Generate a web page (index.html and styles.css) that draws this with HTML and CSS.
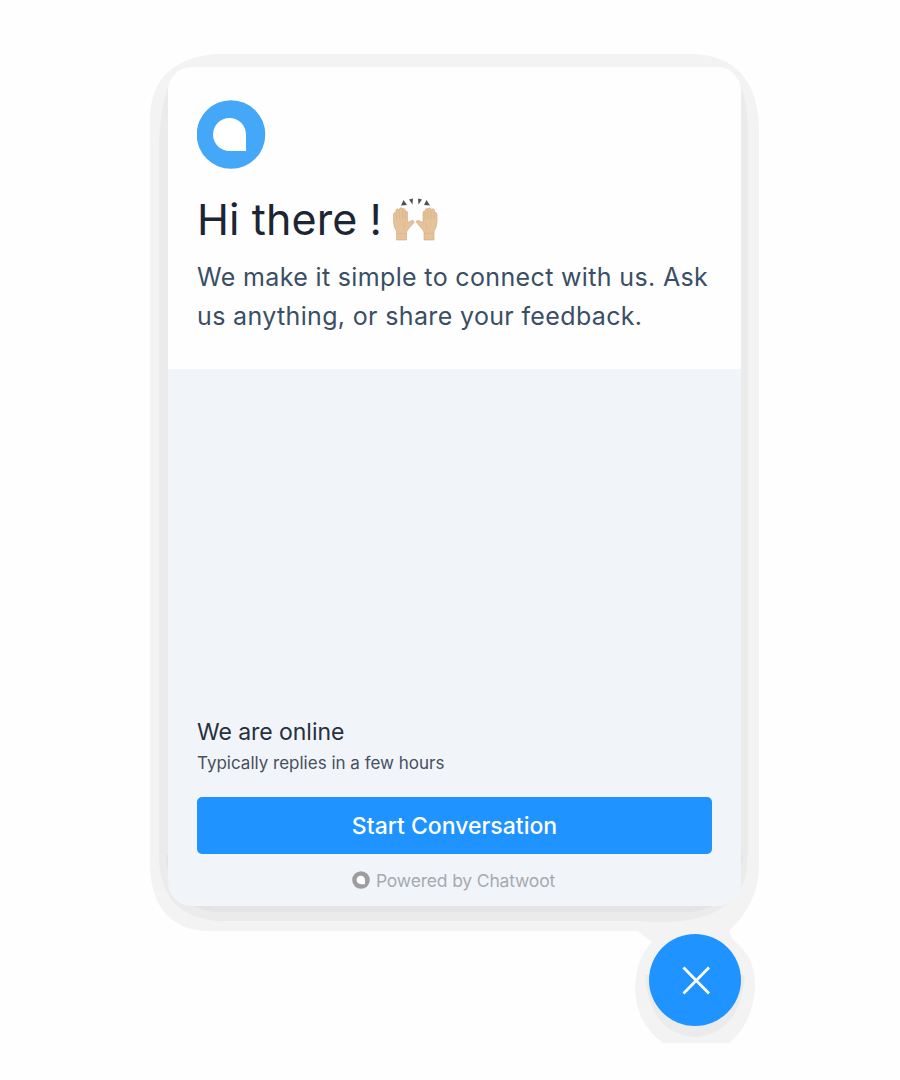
FILE: index.html
```html
<!DOCTYPE html>
<html lang="en">
<head>
<meta charset="utf-8">
<title>Chat widget</title>
<link rel="stylesheet" href="styles.css">
</head>
<body>
<svg class="halo" viewBox="0 0 900 1080" aria-hidden="true">
  <path fill="#f3f3f3" d="M215 54H695Q758 58 759 130V870Q757 904 730 930Q729 938 738 944Q756 960 755 988Q752 1025 729 1043H663Q636 1024 635 988Q636 958 652 942L638 931H205Q153 927 150 868V115Q153 60 215 54Z"/>
  <path fill="#ebebeb" d="M168 87Q160 110 159 145V860Q162 918 220 921H640Q730 929 746 875L748 850V130Q747 98 741 88ZM645 975Q650 1034 695 1037Q740 1034 745 975Z"/>
  <path fill="#e4e4e6" d="M166 855Q168 907 215 912H690Q738 908 743 855Z"/>
</svg>
<div class="widget">
  <main class="card">
    <header class="intro">
      <svg class="logo" viewBox="0 0 69 69" role="img" aria-label="Chatwoot">
        <circle cx="34" cy="34.5" r="34.3" fill="#44a7f7"/>
        <path fill="#fff" d="M49 51H32.500A16.500 16.500 0 1 1 49 34.500Z"/>
      </svg>
      <h1 class="title"><span class="greeting">Hi there !</span>
        <svg class="hands" viewBox="0 0 46 43" aria-hidden="true">
          <g id="hand">
            <path fill="#e5c299" stroke="#d0aa80" stroke-width=".6" d="M3.500 42V33Q.5 29 .5 24V17Q.5 14 3 14V12Q4 10 6 11.500Q7 8.500 9.500 10.500Q12.500 10 12.500 13Q15 13 14.500 16V24.500L19 22.500Q21.500 22 21 24.500L15 31.500L13.500 34V42Z"/>
            <path fill="none" stroke="#d4af86" stroke-width=".6" d="M3.500 14V21M6.500 12V21M9.700 12V21M12.500 14V21M4 35.500H13.500M12 25Q10 28 11 32"/>
          </g>
          <use href="#hand" transform="matrix(-1 0 0 1 44.500 0)"/>
          <path fill="#4c5358" d="M10.500 2L14 7L8 7.500ZM16 1.500L20 .5L19.500 6.500ZM25 .5L29 1.500L25.500 6.500ZM33.500 2L37 7.500L31 7Z"/>
        </svg>
      </h1>
      <p class="lead"><span>We make it simple to connect with us. Ask</span><br><span>us anything, or share your feedback.</span></p>
    </header>
    <section class="team">
      <div class="status">We are online</div>
      <div class="reply">Typically replies in a few hours</div>
      <button class="start" type="button"><span>Start Conversation</span></button>
      <footer class="brand">
        <svg class="mark" viewBox="0 0 18 18" aria-hidden="true">
          <circle cx="9" cy="9" r="8.800" fill="#9c9da0"/>
          <path fill="#fff" d="M13 13.200H9A4.200 4.200 0 1 1 13 9Z"/>
        </svg>
        <span>Powered by Chatwoot</span>
      </footer>
    </section>
  </main>
  <button class="close" type="button" aria-label="Close">
    <svg viewBox="0 0 92 92"><path d="M34.500 33.500L60 59.500M60 33.500L34.500 59.500" fill="none" stroke="#fff" stroke-width="2.800"/></svg>
  </button>
</div>
</body>
</html>
```
FILE: styles.css
```css
* { box-sizing: border-box; }
body { margin: 0; background: #fefefe; font-family: Inter, "Liberation Sans", sans-serif; }
.halo { position: absolute; inset: 0; width: 900px; height: 1080px; z-index: -1; }
.widget { width: 573px; margin: 67px 0 0 168px; display: flex; flex-direction: column; align-items: flex-end; }
.card { width: 573px; height: 839px; border-radius: 24px; overflow: hidden; background: #f1f5fa; display: flex; flex-direction: column; }
.intro { height: 302px; background: #fefefe; padding: 33px 29px 0; }
.logo { display: block; width: 69px; height: 69px; }
.title { margin: 23px 0 0; height: 54px; display: flex; align-items: center; font-size: 43px; line-height: 54px; font-weight: 400; color: #1b2533; letter-spacing: .1px; }
.greeting { width: 196px; white-space: nowrap; }
.hands { width: 46px; height: 43px; }
.lead { margin: 12px 0 0; font-size: 25px; line-height: 39px; font-weight: 400; color: #3a4e65; letter-spacing: .35px; white-space: nowrap; }
.team { flex: 1; padding: 0 29px 14px; display: flex; flex-direction: column; justify-content: flex-end; }
.status { font-size: 23px; line-height: 34px; color: #27303d; font-weight: 400; letter-spacing: -.05px; }
.reply { margin-top: 2px; padding-top: 1px; font-size: 17px; line-height: 23px; color: #46505f; }
.start { margin-top: 22px; height: 57px; padding: 2px 0 0; border: 0; border-radius: 5px; background: #1f93ff; color: #fff; font: 500 23px/55px Inter, sans-serif; }
.brand { margin-top: 14px; height: 24px; display: flex; justify-content: center; align-items: center; gap: 6px; padding-right: 2px; font-size: 17.5px; color: #a7aaae; letter-spacing: -.17px; }
.mark { width: 18px; height: 18px; }
.close { width: 92px; height: 92px; margin-top: 28px; padding: 0; border: 0; border-radius: 50%; background: #1f93ff; }
.close svg { display: block; width: 92px; height: 92px; }
```
